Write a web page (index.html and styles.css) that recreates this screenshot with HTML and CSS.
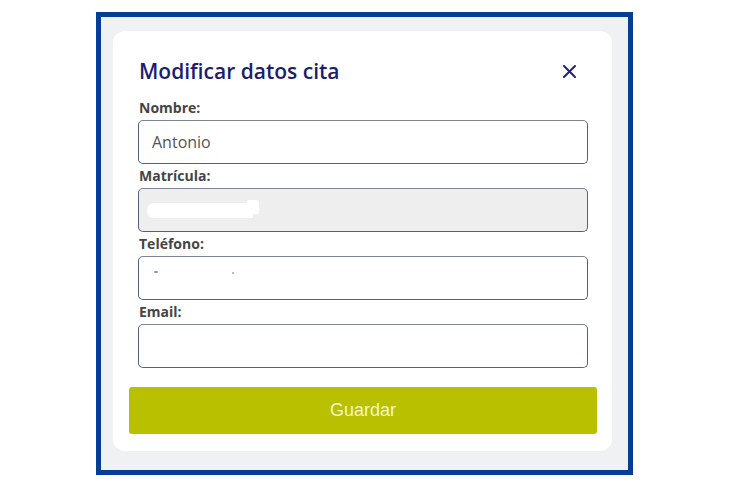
FILE: index.html
```html
<!DOCTYPE html>
<html lang="es">
<head>
<meta charset="utf-8">
<title>Modificar datos cita</title>
<link rel="stylesheet" href="styles.css">
</head>
<body>
<div class="frame">
  <div class="card">
    <div class="form">
      <div class="header">
        <h2 class="title">Modificar datos cita</h2>
        <button class="close" aria-label="Cerrar">
          <svg width="13" height="13" viewBox="0 0 13 13"><path d="M1 1 L12 12 M12 1 L1 12" stroke="#23237a" stroke-width="2" stroke-linecap="round" fill="none"/></svg>
        </button>
      </div>
      <label class="label">Nombre:</label>
      <div class="input">Antonio</div>
      <label class="label">Matrícula:</label>
      <div class="input disabled"><span class="blot"></span><span class="blot-bump"></span></div>
      <label class="label">Teléfono:</label>
      <div class="input"><span class="speck"></span><span class="speck dot"></span></div>
      <label class="label">Email:</label>
      <div class="input"></div>
    </div>
    <button class="save">Guardar</button>
  </div>
</div>
</body>
</html>
```

FILE: styles.css
```css
html, body {
  margin: 0;
  padding: 0;
  background: #ffffff;
}

.frame {
  box-sizing: border-box;
  margin: 12px 0 0 96px;
  width: 537px;
  height: 463px;
  border: 5px solid #063e97;
  background: #f0f1f2;
  padding: 14px 16px 19px 12px;
}

.card {
  box-sizing: border-box;
  width: 499px;
  height: 420px;
  background: #ffffff;
  border-radius: 12px;
  padding: 26px 15px 18px 16px;
}

.form {
  padding: 0 9px 0 9px;
}

.header {
  display: flex;
  align-items: center;
  justify-content: space-between;
  height: 28px;
  margin-bottom: 11px;
}

.title {
  margin: 0;
  font-family: "Open Sans", sans-serif;
  font-size: 21px;
  line-height: 28px;
  font-weight: 600;
  color: #1b1d70;
  padding-left: 1px;
}

.close {
  border: 0;
  background: transparent;
  padding: 0;
  width: 25px;
  height: 25px;
  margin-right: 6px;
  margin-top: 1px;
  display: flex;
  align-items: center;
  justify-content: center;
}

.label {
  display: block;
  font-family: "Open Sans", sans-serif;
  font-weight: 700;
  font-size: 14px;
  line-height: 24px;
  height: 24px;
  color: #444547;
  padding-left: 1px;
}

.input {
  box-sizing: border-box;
  position: relative;
  height: 44px;
  border: 1px solid #51627e;
  border-top-color: #7d8593;
  border-radius: 5px;
  background: #ffffff;
  font-family: "Open Sans", sans-serif;
  font-size: 16px;
  line-height: 42px;
  color: #555555;
  padding-left: 13px;
}

.input.disabled {
  background: #eeeeee;
}

.blot {
  position: absolute;
  left: 8px;
  top: 14px;
  width: 106px;
  height: 15px;
  background: #ffffff;
  border-radius: 7px 2px 2px 6px;
}

.blot-bump {
  position: absolute;
  left: 108px;
  top: 11px;
  width: 12px;
  height: 14px;
  background: #ffffff;
  border-radius: 2px;
}

.speck {
  position: absolute;
  left: 15px;
  top: 14px;
  width: 4px;
  height: 2px;
  background: #9a9a9a;
  border-radius: 1px;
}

.speck.dot {
  left: 93px;
  top: 15px;
  width: 2px;
  height: 2px;
  background: #a5a5a5;
}

.save {
  display: block;
  box-sizing: border-box;
  margin-top: 19px;
  width: 468px;
  height: 47px;
  border: 0;
  border-radius: 3px;
  background: #b9c000;
  color: #f4f6c6;
  font-family: "Liberation Sans", Arial, sans-serif;
  font-size: 18px;
  padding: 0;
}
```
